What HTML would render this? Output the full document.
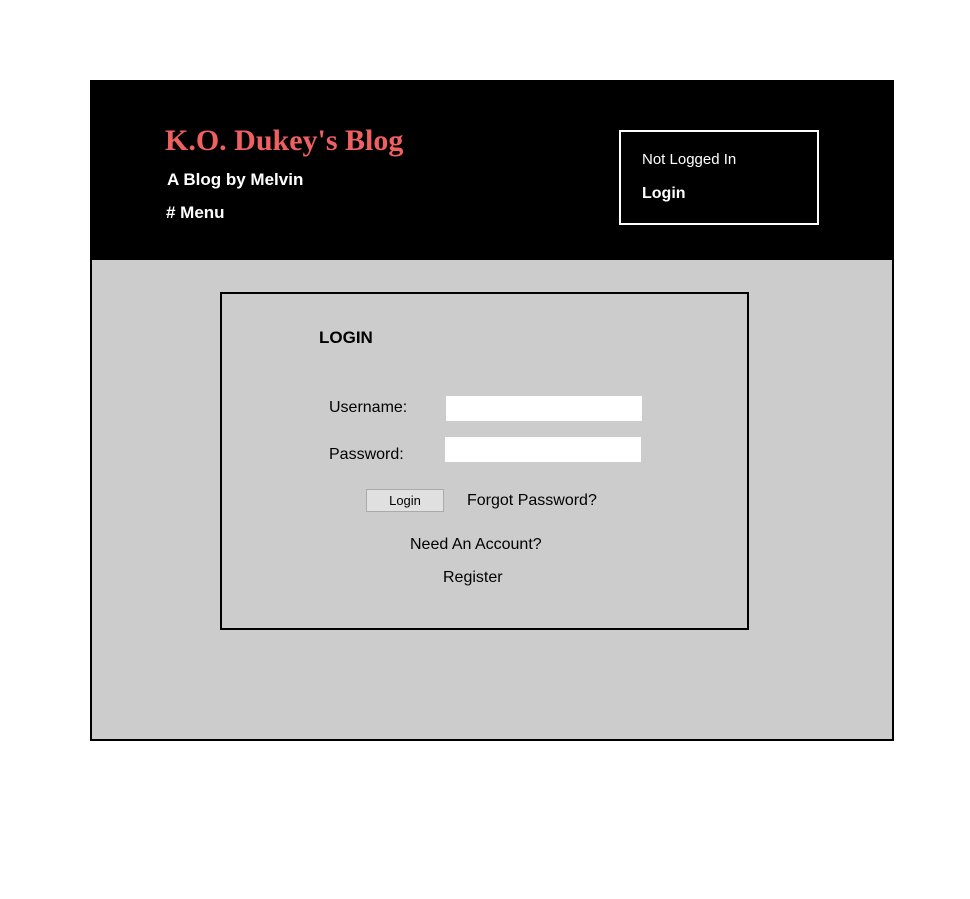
<!DOCTYPE html>
<html><head><style>
body{margin:0;background:#fff;width:970px;height:899px;position:relative;font-family:"Liberation Sans",sans-serif;overflow:hidden}
.a{position:absolute;white-space:nowrap}
</style></head><body>
<div class="a" style="left:90px;top:80px;width:800px;height:657px;border:2px solid #000;background:#ccc"></div>
<div class="a" style="left:90px;top:80px;width:804px;height:180px;background:#000"></div>
<div class="a" style="left:165px;top:124px;font-family:'Liberation Serif',serif;font-weight:bold;font-size:30px;color:#f06060">K.O. Dukey's Blog</div>
<div class="a" style="left:167px;top:170px;font-weight:bold;font-size:17px;color:#fff">A Blog by Melvin</div>
<div class="a" style="left:166px;top:203px;font-weight:bold;font-size:17px;color:#fff"># Menu</div>
<div class="a" style="left:619px;top:130px;width:196px;height:91px;border:2px solid #fff"></div>
<div class="a" style="left:642px;top:151px;font-size:15px;color:#fff">Not Logged In</div>
<div class="a" style="left:642px;top:185px;font-weight:bold;font-size:16px;color:#fff">Login</div>
<div class="a" style="left:220px;top:292px;width:525px;height:334px;border:2px solid #000"></div>
<div class="a" style="left:319px;top:328px;font-weight:bold;font-size:17px">LOGIN</div>
<div class="a" style="left:329px;top:399px;font-size:16px">Username:</div>
<div class="a" style="left:446px;top:396px;width:196px;height:25px;background:#fff"></div>
<div class="a" style="left:329px;top:446px;font-size:16px">Password:</div>
<div class="a" style="left:445px;top:437px;width:196px;height:25px;background:#fff"></div>
<div class="a" style="left:366px;top:489px;width:76px;height:21px;background:#e0e0e0;border:1px solid #aaa;font-size:13px;text-align:center;line-height:22px">Login</div>
<div class="a" style="left:467px;top:492px;font-size:16px">Forgot Password?</div>
<div class="a" style="left:410px;top:536px;font-size:16px">Need An Account?</div>
<div class="a" style="left:443px;top:569px;font-size:16px">Register</div>
</body></html>
